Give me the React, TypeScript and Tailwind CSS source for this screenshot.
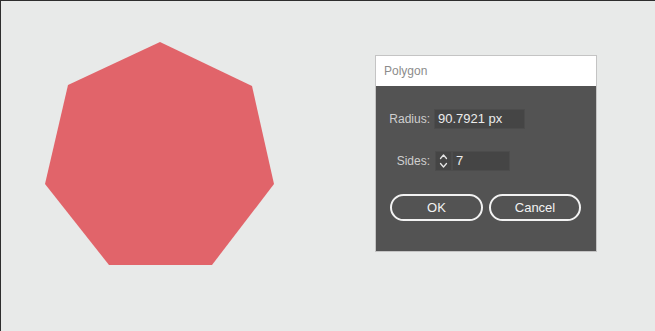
import React from "react"

const font = { fontFamily: '"Liberation Sans", Arial, sans-serif' }

// small up/down chevrons used on the sides field
function Spinner() {
  return (
    <svg width="9" height="16" viewBox="0 0 9 16" fill="none" stroke="#e6e6e6" strokeWidth="1.3" strokeLinecap="round" strokeLinejoin="round">
      <path d="M1.5 5.5 L4.5 2 L7.5 5.5" />
      <path d="M1.5 10.5 L4.5 14 L7.5 10.5" />
    </svg>
  )
}

function PolygonDialog() {
  return (
    <div className="ml-[100px] mt-[54px] flex h-[197px] w-[222px] flex-col border border-[#c4c4c4]" style={font}>
      <div className="flex h-[30px] items-center bg-white pl-[8px] text-[12px] text-[#8c8c8c]">Polygon</div>
      <div className="flex flex-1 flex-col bg-[#535353] pt-[23px]">
        <div className="flex h-[20px] items-center">
          <span className="w-[55px] pr-[1px] text-right text-[12px] text-[#cfcfcf]">Radius:</span>
          <div className="ml-[3px] flex h-[20px] w-[91px] items-center border border-[#4c4c4c] bg-[#454545] pl-[3px] text-[13px] text-[#ececec]">
            90.7921 px
          </div>
        </div>
        <div className="mt-[22px] flex h-[20px] items-center">
          <span className="w-[55px] pr-[1px] text-right text-[12px] text-[#cfcfcf]">Sides:</span>
          <div className="ml-[4px] flex h-[20px] w-[17px] items-center justify-center border border-[#4c4c4c] bg-[#454545]">
            <Spinner />
          </div>
          <div className="flex h-[20px] w-[58px] items-center border border-[#4c4c4c] bg-[#454545] pl-[3px] text-[13px] text-[#ececec]">
            7
          </div>
        </div>
        <div className="mt-[23px] flex gap-[6px] pl-[14px]">
          <button className="flex h-[27px] w-[93px] items-center justify-center rounded-full border-2 border-[#f2f2f2] text-[13px] text-[#f2f2f2]">
            OK
          </button>
          <button className="flex h-[27px] w-[92px] items-center justify-center rounded-full border-2 border-[#f2f2f2] text-[13px] text-[#f2f2f2]">
            Cancel
          </button>
        </div>
      </div>
    </div>
  )
}

export default function App() {
  return (
    <div className="flex h-[331px] w-[655px] items-start border-l border-t border-[#2e2e2e] bg-[#e8eae9] pl-[44px]">
      <svg className="mt-[41px] shrink-0" width="230" height="224" viewBox="0 0 230 224">
        <polygon points="115,0 207,44 229,142 167,223 64,223 0,142 23,43" fill="#e1646a" />
      </svg>
      <PolygonDialog />
    </div>
  )
}
